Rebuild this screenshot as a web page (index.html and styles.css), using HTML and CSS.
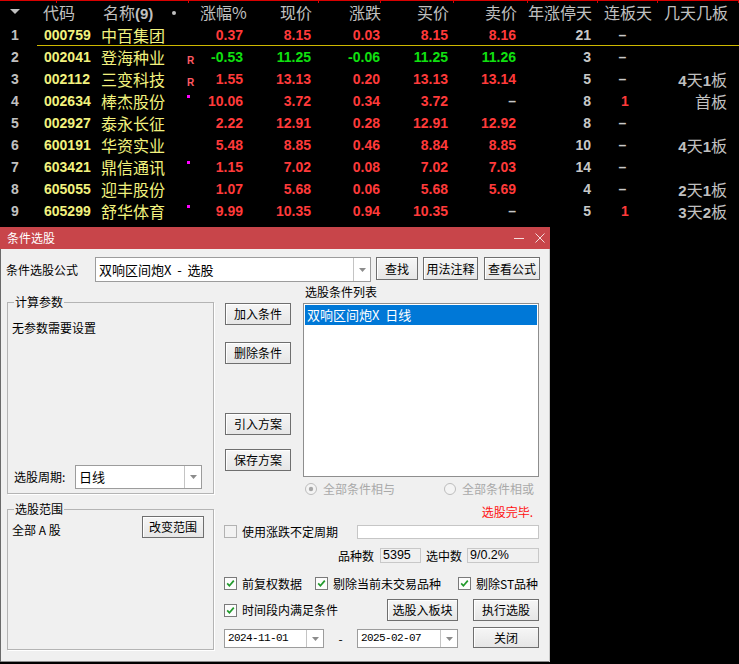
FILE: index.html
```html
<!DOCTYPE html>
<html lang="zh-CN">
<head>
<meta charset="utf-8">
<title>条件选股</title>
<link rel="stylesheet" href="styles.css">
</head>
<body>
<div class="quotes">
  <div class="row head">
    <div class="c idx"><svg class="sorttri" width="10" height="6" viewBox="0 0 10 6"><path d="M0 0H10L5 5Z" fill="#c0c0c0"/></svg></div>
    <div class="c hcode">代码</div>
    <div class="c hname">名称<b>(9)</b></div>
    <div class="c hmark"><span class="hdot"></span></div>
    <div class="c hnum">涨幅%</div>
    <div class="c hnum">现价</div>
    <div class="c hnum">涨跌</div>
    <div class="c hnum">买价</div>
    <div class="c hnum">卖价</div>
    <div class="c hnum">年涨停天</div>
    <div class="c hnum hlb">连板天</div>
    <div class="c hnum hjt">几天几板</div>
  </div>

  <div class="row sel">
    <div class="c idx">1</div><div class="c code">000759</div><div class="c name">中百集团</div><div class="c mark"></div>
    <div class="c num up">0.37</div><div class="c num up">8.15</div><div class="c num up">0.03</div><div class="c num up">8.15</div><div class="c num up">8.16</div>
    <div class="c num gr">21</div><div class="c lb gr">–</div><div class="c jt"></div>
  </div>
  <div class="row">
    <div class="c idx">2</div><div class="c code">002041</div><div class="c name">登海种业</div><div class="c mark"><span class="r">R</span></div>
    <div class="c num dn">-0.53</div><div class="c num dn">11.25</div><div class="c num dn">-0.06</div><div class="c num dn">11.25</div><div class="c num dn">11.26</div>
    <div class="c num gr">3</div><div class="c lb gr">–</div><div class="c jt"></div>
  </div>
  <div class="row">
    <div class="c idx">3</div><div class="c code">002112</div><div class="c name">三变科技</div><div class="c mark"><span class="r">R</span></div>
    <div class="c num up">1.55</div><div class="c num up">13.13</div><div class="c num up">0.20</div><div class="c num up">13.13</div><div class="c num up">13.14</div>
    <div class="c num gr">5</div><div class="c lb gr">–</div><div class="c jt"><b>4</b>天<b>1</b>板</div>
  </div>
  <div class="row">
    <div class="c idx">4</div><div class="c code">002634</div><div class="c name">棒杰股份</div><div class="c mark"><span class="sq"></span></div>
    <div class="c num up">10.06</div><div class="c num up">3.72</div><div class="c num up">0.34</div><div class="c num up">3.72</div><div class="c num gr">–</div>
    <div class="c num gr">8</div><div class="c lb up">1</div><div class="c jt">首板</div>
  </div>
  <div class="row">
    <div class="c idx">5</div><div class="c code">002927</div><div class="c name">泰永长征</div><div class="c mark"></div>
    <div class="c num up">2.22</div><div class="c num up">12.91</div><div class="c num up">0.28</div><div class="c num up">12.91</div><div class="c num up">12.92</div>
    <div class="c num gr">8</div><div class="c lb gr">–</div><div class="c jt"></div>
  </div>
  <div class="row">
    <div class="c idx">6</div><div class="c code">600191</div><div class="c name">华资实业</div><div class="c mark"></div>
    <div class="c num up">5.48</div><div class="c num up">8.85</div><div class="c num up">0.46</div><div class="c num up">8.84</div><div class="c num up">8.85</div>
    <div class="c num gr">10</div><div class="c lb gr">–</div><div class="c jt"><b>4</b>天<b>1</b>板</div>
  </div>
  <div class="row">
    <div class="c idx">7</div><div class="c code">603421</div><div class="c name">鼎信通讯</div><div class="c mark"><span class="sq"></span></div>
    <div class="c num up">1.15</div><div class="c num up">7.02</div><div class="c num up">0.08</div><div class="c num up">7.02</div><div class="c num up">7.03</div>
    <div class="c num gr">14</div><div class="c lb gr">–</div><div class="c jt"></div>
  </div>
  <div class="row">
    <div class="c idx">8</div><div class="c code">605055</div><div class="c name">迎丰股份</div><div class="c mark"></div>
    <div class="c num up">1.07</div><div class="c num up">5.68</div><div class="c num up">0.06</div><div class="c num up">5.68</div><div class="c num up">5.69</div>
    <div class="c num gr">4</div><div class="c lb gr">–</div><div class="c jt"><b>2</b>天<b>1</b>板</div>
  </div>
  <div class="row">
    <div class="c idx">9</div><div class="c code">605299</div><div class="c name">舒华体育</div><div class="c mark"><span class="sq"></span></div>
    <div class="c num up">9.99</div><div class="c num up">10.35</div><div class="c num up">0.94</div><div class="c num up">10.35</div><div class="c num gr">–</div>
    <div class="c num gr">5</div><div class="c lb up">1</div><div class="c jt"><b>3</b>天<b>2</b>板</div>
  </div>
</div>

<div class="dialog">
  <div class="titlebar">
    <span class="title">条件选股</span>
    <span class="wbtns">
      <svg width="11" height="9" viewBox="0 0 11 9"><path d="M0 4.5H10" stroke="#f4dcdc" stroke-width="1"/></svg>
      <svg width="10" height="10" viewBox="0 0 10 10"><path d="M0.5 0.5L9.5 9.5M9.5 0.5L0.5 9.5" stroke="#f4dcdc" stroke-width="1"/></svg>
    </span>
  </div>
  <div class="dbody">
    <div class="formula-row">
      <span class="flabel">条件选股公式</span>
      <div class="combo fcombo">
        <span class="ctext">双响区间炮X  -  选股</span>
        <span class="drop"><svg width="7" height="4" viewBox="0 0 7 4"><path d="M0 0H7L3.5 4Z" fill="#8c8c8c"/></svg></span>
      </div>
      <div class="btn b-find">查找</div>
      <div class="btn b-usage">用法注释</div>
      <div class="btn b-view">查看公式</div>
    </div>

    <div class="main">
      <div class="leftcol">
        <div class="group g1">
          <span class="gtitle">计算参数</span>
          <div class="noparam">无参数需要设置</div>
          <div class="period">
            <span class="plabel">选股周期:</span>
            <div class="combo pcombo">
              <span class="ctext">日线</span>
              <span class="drop"><svg width="7" height="4" viewBox="0 0 7 4"><path d="M0 0H7L3.5 4Z" fill="#8c8c8c"/></svg></span>
            </div>
          </div>
        </div>
        <div class="group g2">
          <span class="gtitle">选股范围</span>
          <div class="range">
            <span class="rlabel">全部 A 股</span>
            <div class="btn b-range">改变范围</div>
          </div>
        </div>
      </div>

      <div class="rightcol">
        <div class="s1">
          <div class="bcol">
            <div class="btn b-add">加入条件</div>
            <div class="btn b-del">删除条件</div>
            <div class="btn b-imp">引入方案</div>
            <div class="btn b-save">保存方案</div>
          </div>
          <div class="lsec">
            <div class="llabel">选股条件列表</div>
            <div class="listbox">
              <div class="litem">双响区间炮X  日线</div>
            </div>
          </div>
        </div>

        <div class="radios">
          <span class="ritem">
            <svg width="12" height="12" viewBox="0 0 12 12"><circle cx="6" cy="6" r="5.5" fill="#f4f4f4" stroke="#bcbcbc"/><circle cx="6" cy="6" r="2.2" fill="#a8a8a8"/></svg>
            <span>全部条件相与</span>
          </span>
          <span class="ritem">
            <svg width="12" height="12" viewBox="0 0 12 12"><circle cx="6" cy="6" r="5.5" fill="#f4f4f4" stroke="#bcbcbc"/></svg>
            <span>全部条件相或</span>
          </span>
        </div>

        <div class="status">选股完毕.</div>

        <div class="crow1">
          <svg class="cb" width="13" height="13" viewBox="0 0 13 13"><rect x="0.5" y="0.5" width="12" height="12" fill="#f2f2f2" stroke="#b2b2b2"/></svg>
          <span class="ctxt">使用涨跌不定周期</span>
          <div class="edit"></div>
        </div>

        <div class="stats">
          <span>品种数</span>
          <div class="ro ro1">5395</div>
          <span>选中数</span>
          <div class="ro ro2">9/0.2%</div>
        </div>

        <div class="crow2">
          <span class="citem ci1">
            <svg class="cb" width="13" height="13" viewBox="0 0 13 13"><rect x="0.5" y="0.5" width="12" height="12" fill="#fcfcfc" stroke="#7a7a7a"/><path d="M3.2 6.4L5.4 8.8L9.8 3.6" fill="none" stroke="#219a2b" stroke-width="1.7"/></svg>
            <span class="ctxt">前复权数据</span>
          </span>
          <span class="citem ci2">
            <svg class="cb" width="13" height="13" viewBox="0 0 13 13"><rect x="0.5" y="0.5" width="12" height="12" fill="#fcfcfc" stroke="#7a7a7a"/><path d="M3.2 6.4L5.4 8.8L9.8 3.6" fill="none" stroke="#219a2b" stroke-width="1.7"/></svg>
            <span class="ctxt">剔除当前未交易品种</span>
          </span>
          <span class="citem ci3">
            <svg class="cb" width="13" height="13" viewBox="0 0 13 13"><rect x="0.5" y="0.5" width="12" height="12" fill="#fcfcfc" stroke="#7a7a7a"/><path d="M3.2 6.4L5.4 8.8L9.8 3.6" fill="none" stroke="#219a2b" stroke-width="1.7"/></svg>
            <span class="ctxt">剔除ST品种</span>
          </span>
        </div>

        <div class="crow3">
          <svg class="cb" width="13" height="13" viewBox="0 0 13 13"><rect x="0.5" y="0.5" width="12" height="12" fill="#fcfcfc" stroke="#7a7a7a"/><path d="M3.2 6.4L5.4 8.8L9.8 3.6" fill="none" stroke="#219a2b" stroke-width="1.7"/></svg>
          <span class="ctxt">时间段内满足条件</span>
          <div class="btn b-block">选股入板块</div>
          <div class="btn b-run">执行选股</div>
        </div>

        <div class="daterow">
          <div class="combo dcombo">
            <span class="dtext">2024-11-01</span>
            <span class="drop"><svg width="7" height="4" viewBox="0 0 7 4"><path d="M0 0H7L3.5 4Z" fill="#8c8c8c"/></svg></span>
          </div>
          <span class="dash">-</span>
          <div class="combo dcombo d2">
            <span class="dtext">2025-02-07</span>
            <span class="drop"><svg width="7" height="4" viewBox="0 0 7 4"><path d="M0 0H7L3.5 4Z" fill="#8c8c8c"/></svg></span>
          </div>
          <div class="btn b-close">关闭</div>
        </div>
      </div>
    </div>
  </div>
</div>
</body>
</html>
```

FILE: styles.css
```css
* { box-sizing: border-box; margin: 0; padding: 0; }
html, body { background: #000; }
body {
  width: 739px;
  height: 664px;
  overflow: hidden;
  font-family: "Noto Sans CJK SC", "Liberation Sans", sans-serif;
}

/* ---------- quote table ---------- */
.quotes { height: 222px; }
.row {
  display: grid;
  grid-template-columns: 37px 60px 73px 30px 45px 68px 69px 68px 68px 75px 59px 87px;
  height: 22px;
  line-height: 22px;
}
.row.head {
  height: 24px;
  line-height: 24px;
  font-size: 16px;
  color: #c0c0c0;
  background:
    linear-gradient(#d80000, #d80000) 0 0 / 100% 1px no-repeat,
    linear-gradient(#d80000, #d80000) 56px 0 / 1px 3px no-repeat,
    linear-gradient(#d80000, #d80000) 188px 0 / 1px 3px no-repeat,
    linear-gradient(#d80000, #d80000) 318px 0 / 1px 3px no-repeat,
    linear-gradient(#d80000, #d80000) 380px 0 / 1px 3px no-repeat,
    linear-gradient(#d80000, #d80000) 453px 0 / 1px 3px no-repeat,
    linear-gradient(#d80000, #d80000) 527px 0 / 1px 3px no-repeat,
    linear-gradient(#d80000, #d80000) 597px 0 / 1px 3px no-repeat,
    linear-gradient(#d80000, #d80000) 657px 0 / 1px 3px no-repeat,
    linear-gradient(#d80000, #d80000) 738px 0 / 1px 3px no-repeat;
}
.row.sel {
  background: linear-gradient(#cdb800, #cdb800) 37px 21px / 702px 1px no-repeat;
}
.c { white-space: nowrap; }
.idx {
  padding-left: 11px;
  font: bold 14px/22px "Liberation Sans", sans-serif;
  color: #c0c0c0;
}
.head .idx { line-height: 24px; padding-left: 10px; }
.sorttri { vertical-align: middle; margin-top: -2px; }
.hcode { padding-left: 6px; }
.hname { padding-left: 6px; }
.hname b { font: bold 15px "Liberation Sans", sans-serif; }
.hmark { padding-left: 2px; }
.hdot {
  display: inline-block;
  width: 4px; height: 4px;
  border-radius: 2px;
  background: #c0c0c0;
  vertical-align: middle;
  margin-top: -3px;
}
.hnum { text-align: right; padding-right: 1px; }
.hlb { padding-right: 0; }
.hjt { padding-right: 11px; }

.code {
  padding-left: 7px;
  font: bold 14px/22px "Liberation Sans", sans-serif;
  color: #f2f27e;
}
.name {
  padding-left: 4px;
  font-size: 16px;
  color: #f2f27e;
}
.mark { padding-left: 17px; }
.r {
  display: block;
  font: bold 10px/10px "Liberation Sans", sans-serif;
  color: #ff5a64;
  margin-top: 10px;
}
.sq {
  display: block;
  width: 3px; height: 3px;
  background: #ff00ff;
  margin-top: 5px;
}
.num {
  text-align: right;
  padding-right: 2px;
  font: bold 14px/22px "Liberation Sans", sans-serif;
}
.lb {
  text-align: center;
  font: bold 14px/22px "Liberation Sans", sans-serif;
}
.lb.up { padding-left: 5px; }
.up { color: #ff3a3a; }
.dn { color: #10e010; }
.gr { color: #c8c8c8; }
.jt {
  text-align: right;
  padding-right: 12px;
  font-size: 16px;
  color: #c0c0c0;
}
.jt b { font: bold 15px "Liberation Sans", sans-serif; }

/* ---------- dialog ---------- */
.dialog {
  margin-top: 5px;
  width: 550px;
  height: 435px;
  background: #f0f0f0;
  box-shadow: inset 1px 0 #6a6a6a, inset -1px 0 #c8c8c8, inset 0 -1px #8a8a8a;
  font-size: 12px;
  line-height: 14px;
  color: #000;
}
.titlebar {
  height: 22px;
  background: #c8454a;
  display: flex;
  align-items: center;
  justify-content: space-between;
  padding: 0 5px 0 7px;
}
.title { color: #fff; font-size: 12px; line-height: 14px; }
.wbtns { display: flex; align-items: center; gap: 10px; }

.formula-row {
  display: flex;
  align-items: flex-start;
  margin-top: 8px;
  height: 25px;
}
.flabel {
  width: 95px;
  padding-left: 6px;
  line-height: 25px;
}
.combo {
  display: flex;
  background: #fff;
  border: 1px solid #9c9c9c;
}
.ctext {
  flex: 1;
  white-space: pre;
  font-size: 13px;
  padding-left: 3px;
  display: flex;
  align-items: center;
}
.drop {
  width: 17px;
  border-left: 1px solid #c4c4c4;
  display: flex;
  align-items: center;
  justify-content: center;
}
.fcombo { width: 276px; height: 25px; }
.btn {
  height: 22px;
  border: 1px solid #6f6f6f;
  background: linear-gradient(#f6f6f6, #e6e6e6);
  box-shadow: inset 1px 1px #ffffff;
  display: flex;
  align-items: center;
  justify-content: center;
  white-space: nowrap;
}
.b-find { width: 42px; margin-left: 5px; height: 23px; }
.b-usage { width: 55px; margin-left: 5px; height: 23px; }
.b-view { width: 56px; margin-left: 6px; height: 23px; }

.main { display: flex; }
.leftcol { margin-left: 7px; width: 207px; padding-top: 20px; }
.group {
  position: relative;
  border: 1px solid #b4b4b4;
  box-shadow: 1px 1px #ffffff;
}
.gtitle {
  position: absolute;
  top: -8px;
  left: 6px;
  padding: 0 1px;
  background: #f0f0f0;
  line-height: 14px;
}
.g1 {
  height: 192px;
  display: flex;
  flex-direction: column;
  padding: 18px 4px 4px 4px;
}
.noparam { line-height: 14px; }
.period {
  margin-top: auto;
  display: flex;
  align-items: center;
  padding-left: 2px;
}
.plabel { width: 61px; }
.pcombo { width: 127px; height: 24px; }
.g2 {
  margin-top: 15px;
  height: 141px;
  padding: 6px 9px 0 4px;
}
.range { display: flex; justify-content: space-between; align-items: flex-start; }
.rlabel { margin-top: 7px; font-size: 12px; white-space: pre; }
.b-range { width: 62px; }

.rightcol { margin-left: 10px; width: 315px; }
.s1 { display: flex; margin-top: 3px; }
.bcol { display: flex; flex-direction: column; margin-left: 1px; width: 66px; }
.b-add { margin-top: 18px; }
.b-del { margin-top: 17px; }
.b-imp { margin-top: 49px; }
.b-save { margin-top: 14px; }
.lsec { margin-left: auto; width: 236px; }
.llabel { padding-left: 2px; line-height: 14px; }
.listbox {
  margin-top: 4px;
  height: 174px;
  background: #fff;
  border: 1px solid #8e8e8e;
  padding: 1px;
}
.litem {
  height: 20px;
  background: #0078d7;
  color: #fff;
  font-size: 13px;
  line-height: 20px;
  padding-left: 2px;
  white-space: pre;
}

.radios {
  margin-top: 5px;
  height: 14px;
  display: flex;
  justify-content: space-between;
  padding: 0 5px 0 81px;
  color: #a9a9a9;
}
.ritem { display: flex; align-items: center; gap: 6px; }

.status {
  margin-top: 9px;
  height: 14px;
  text-align: right;
  padding-right: 6px;
  color: #ff1010;
}

.crow1 {
  margin-top: 5px;
  height: 15px;
  display: flex;
  align-items: center;
}
.ctxt { margin-left: 5px; white-space: nowrap; }
.edit {
  margin-left: auto;
  width: 182px;
  height: 14px;
  background: #fff;
  border: 1px solid #c6c6c6;
}

.stats {
  margin-top: 9px;
  height: 15px;
  display: flex;
  align-items: center;
  justify-content: flex-end;
}
.ro {
  height: 15px;
  border: 1px solid #c8c8c8;
  font: 12.5px/13px "Liberation Sans", sans-serif;
  padding-left: 2px;
}
.ro1 { width: 41px; margin: 0 5px 0 6px; }
.ro2 { width: 72px; margin-left: 5px; }

.crow2 {
  margin-top: 13px;
  height: 15px;
  display: flex;
  align-items: center;
}
.citem { display: flex; align-items: center; }
.ci1 { width: 91px; }
.ci2 { width: 143px; }

.crow3 {
  margin-top: 8px;
  height: 22px;
  display: flex;
  align-items: center;
}
.b-block { margin-left: auto; width: 71px; }
.b-run { margin-left: 15px; width: 66px; }

.daterow {
  margin-top: 6px;
  height: 21px;
  display: flex;
  align-items: flex-start;
}
.dcombo { width: 100px; height: 19px; margin-top: 2px; }
.d2 { width: 101px; }
.dtext {
  flex: 1;
  font: 11px/17px "Liberation Mono", monospace;
  letter-spacing: -0.6px;
  padding-left: 3px;
}
.dash { width: 33px; text-align: center; line-height: 24px; }
.b-close { margin-left: 15px; width: 66px; height: 21px; }
```
